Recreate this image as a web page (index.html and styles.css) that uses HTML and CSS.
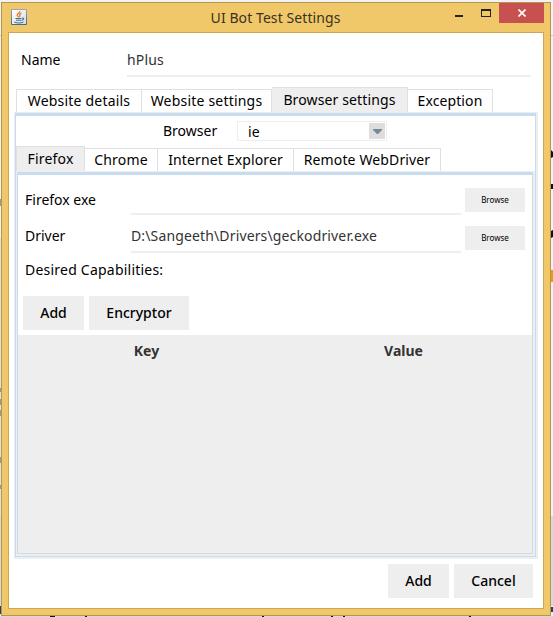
FILE: index.html
```html
<!DOCTYPE html>
<html lang="en">
<head>
<meta charset="utf-8">
<title>UI Bot Test Settings</title>
<link rel="stylesheet" href="styles.css">
</head>
<body>
<svg class="backdrop" width="553" height="617" aria-hidden="true">
  <path fill="#c8c8c8" d="M0 35h1v1H0zM551 35h2v1h-2z"/>
  <path fill="#dde2e6" d="M0 238h1v278H0z"/><path fill="#d3dae0" d="M0 516h1v90H0zM551 516h2v90h-2zM0 616h553v1H0z"/>
  <path fill="#999" d="M0 199h1v7H0zM0 388h1v4H0zM0 399h1v6H0zM0 410h1v6H0zM0 457h1v6H0zM0 485h1v4H0z"/>
  <path fill="#111" d="M551 150l2 2v5l-2 1zM551 184h2v5h-2zM551 231l2-1v7l-2 1zM50 616h5v1h-5zM85 616h2v1h-2zM262 616h2v1h-2zM331 616h2v1h-2zM343 616h2v1h-2zM469 616h2v1h-2z"/>
  <path fill="#e99b12" d="M551 270h2v12h-2z"/>
  <path fill="#263e68" d="M0 606h1v8H0zM551 607h2v5h-2z"/>
</svg>
<main class="window">
  <header class="titlebar">
    <svg class="java" width="16" height="16" viewBox="0 0 16 16">
      <defs><linearGradient id="jg" x1="0" y1="0" x2="0" y2="1"><stop offset="0" stop-color="#9aa9b5"/><stop offset="1" stop-color="#3f6a8e"/></linearGradient>
      <linearGradient id="jf" x1="0" y1="0" x2="1" y2="1"><stop offset="0" stop-color="#fff"/><stop offset="1" stop-color="#d5dee6"/></linearGradient></defs>
      <rect width="16" height="16" rx="1" fill="url(#jg)"/><rect x="1" y="1" width="14" height="14" fill="url(#jf)"/>
      <path d="M8.800 2C9.400 4 5.800 4.400 6.200 6.200 6.400 7 7.200 7.400 7.400 8.300M10.500 4.200C8.400 5 8.300 5.800 8.900 6.500 9.200 7 8.800 7.500 8.300 8" fill="none" stroke="#e57a28" stroke-width="1.300"/>
      <path d="M4.500 9.500H10.500M11 9c2.300-.4 2.300 1.800-.2 2.300M5 11.200h5.300M3.300 13c2.700 1.200 6.700 1 9-.1" fill="none" stroke="#426e91" stroke-width="1.100"/>
    </svg>
    <h1 class="title">UI Bot Test Settings</h1>
    <svg class="controls" width="48" height="20" viewBox="0 0 48 20" shape-rendering="crispEdges">
      <path d="M4 12h8v2H4z" fill="#222"/><path d="M30 6h10v8H30zM31 8v5h8V8z" fill="#222" fill-rule="evenodd"/>
    </svg>
    <div class="close"><svg width="8" height="8" viewBox="0 0 8 8"><path d="M.5.5l7 7M7.500.5l-7 7" stroke="#fff" stroke-width="1.700"/></svg></div>
  </header>
  <section class="content">
    <div class="name-row"><label>Name</label><div class="field">hPlus</div></div>
    <nav class="tabs">
      <span class="tab w-details">Website details</span><span class="tab w-settings">Website settings</span><span class="tab active w-browser">Browser settings</span><span class="tab w-exception">Exception</span>
    </nav>
    <div class="panel">
      <div class="browser-row"><label>Browser</label>
        <div class="select"><span>ie</span><i><svg width="9" height="5" viewBox="0 0 9 5"><path d="M0 0h9v1L5 5H4L0 1z" fill="#758a98"/></svg></i></div>
      </div>
      <nav class="tabs inner">
        <span class="tab active w-firefox">Firefox</span><span class="tab w-chrome">Chrome</span><span class="tab w-ie">Internet Explorer</span><span class="tab w-remote">Remote WebDriver</span>
      </nav>
      <div class="inner-panel">
        <div class="file-row"><label>Firefox exe</label><div class="field"></div><button class="browse">Browse</button></div>
        <div class="file-row driver"><label>Driver</label><div class="field">D:\Sangeeth\Drivers\geckodriver.exe</div><button class="browse">Browse</button></div>
        <div class="caps">Desired Capabilities:</div>
        <div class="actions"><button class="add">Add</button><button class="encrypt">Encryptor</button></div>
        <div class="table"><b>Key</b><b>Value</b></div>
      </div>
    </div>
    <footer class="actions footer"><button class="add">Add</button><button class="cancel">Cancel</button></footer>
  </section>
</main>
</body>
</html>
```
FILE: styles.css
```css
* { box-sizing: border-box; }
body { margin: 0; width: 553px; height: 617px; padding: 2px 0 0 1px; overflow: hidden; background: #f2f2f2; color: #000; font: 14px/20px "Noto Sans", sans-serif; }
.backdrop { position: absolute; left: 0; top: 0; }
.window { position: relative; width: 550px; height: 614px; padding: 0 6px 6px; background: #f0c86a; border: 1px solid #b4964e; }
.titlebar { display: flex; height: 29px; align-items: flex-start; }
.java { margin: 6px 0 0 3px; }
.title { flex: 1; margin: 5px 0 0; padding-left: 73px; text-align: center; font: 14px/20px "Noto Sans", sans-serif; letter-spacing: .08px; color: #3a3220; }
.close { display: flex; justify-content: center; align-items: center; width: 45px; height: 20px; background: #c75050; }
.content { height: 577px; background: #fff; border: 1px solid #c9a755; padding: 0 5px; }
.name-row { display: flex; height: 54px; padding: 17px 0 0 7px; }
.name-row label { width: 106px; }
.name-row .field { width: 404px; height: 27px; }
.field { border-bottom: 2px solid #eee; color: #333; white-space: nowrap; letter-spacing: .14px; }
.tabs { display: flex; align-items: flex-end; height: 25px; padding-left: 2px; }
.tab { height: 23px; line-height: 22px; border: 1px solid #e0e0e0; border-width: 1px 1px 0 0; text-align: center; white-space: nowrap; letter-spacing: .2px; }
.tab:first-child { border-left-width: 1px; }
.tab.active { height: 25px; line-height: 23px; background: #eee; }
.w-details { width: 126px; }
.w-settings { width: 130px; }
.w-browser { width: 136px; letter-spacing: .13px; }
.w-exception { width: 85px; letter-spacing: .1px; }
.w-firefox { width: 69px; }
.w-chrome { width: 73px; }
.w-ie { width: 136px; letter-spacing: .13px; }
.w-remote { width: 147px; letter-spacing: .13px; }
.panel { width: 524px; height: 447px; border: 1px solid #eaecee; border-right: 2px solid #eee; border-bottom: 2px solid #eee; padding: 3px 1px 1px; background: linear-gradient(#c8dcf0, #c8dcf0) left / 1px 100% no-repeat, linear-gradient(#c8dcf0, #c8dcf0) right / 1px 100% no-repeat, linear-gradient(#c8dcf0, #c8dcf0) top / 100% 3px no-repeat, linear-gradient(#c8dcf0, #c8dcf0) bottom / 100% 1px no-repeat; }
.browser-row { display: flex; height: 30px; padding: 5px 0 0 147px; }
.browser-row label { width: 74px; }
.select { display: flex; justify-content: space-between; width: 150px; height: 20px; padding: 1px; border: 1px solid #eee; }
.select span { padding-left: 9px; line-height: 17px; letter-spacing: .2px; }
.select i { display: flex; align-items: center; justify-content: center; width: 16px; height: 16px; background: #ddd; }
.inner { padding-left: 0; }
.inner-panel { width: 519px; height: 385px; border: solid #eee; border-width: 1px 2px 2px 1px; background: #fff; box-shadow: inset 1px 0 #c8dcf0, inset -1px -1px #c8dcf0, inset 0 3px #c8dcf0; padding: 3px 1px 1px; }
.file-row { display: flex; height: 42px; padding: 15px 0 0 7px; }
.file-row label { width: 106px; }
.file-row .field { width: 330px; height: 25px; }
.file-row .browse { margin: -2px 0 0 4px; }
.driver { height: 43px; padding-top: 9px; }
.driver .field { height: 27px; }
.driver .browse { margin-top: 0; }
button { border: 0; padding: 0; background: #eee; color: #000; font: 500 14px/20px "Noto Sans", sans-serif; }
button.browse { width: 60px; height: 24px; font-size: 8px; font-weight: 400; }
.caps { height: 36px; padding-left: 7px; letter-spacing: .22px; }
.actions { display: flex; gap: 5px; height: 39px; padding-left: 5px; }
.actions button { height: 34px; }
.add { width: 61px; }
.encrypt { width: 100px; }
.cancel { width: 79px; }
.table { display: flex; height: 218px; padding-top: 6px; background: #eee; color: #333; }
.table b { width: 50%; text-align: center; }
.footer { justify-content: flex-end; height: 39px; margin-top: 5px; padding: 0 5px 0 0; }
```
